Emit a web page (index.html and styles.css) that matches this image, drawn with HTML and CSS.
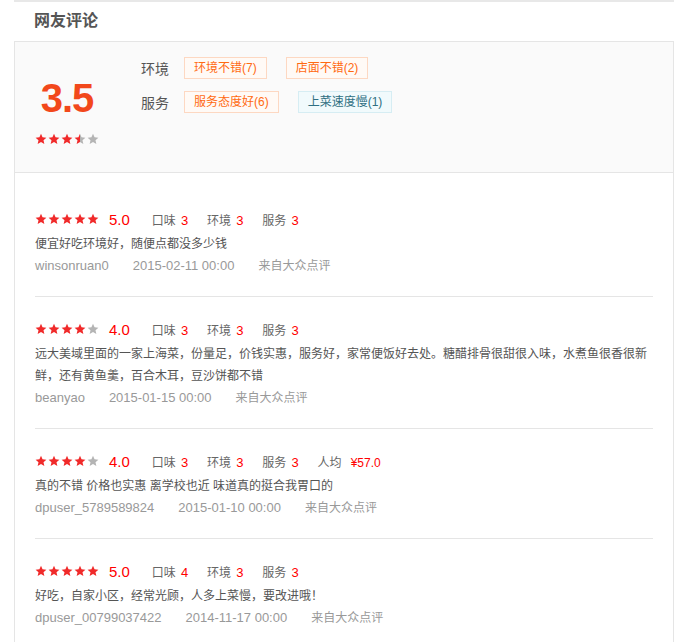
FILE: index.html
```html
<!DOCTYPE html>
<html lang="zh">
<head>
<meta charset="utf-8">
<link rel="stylesheet" href="styles.css">
</head>
<body>
<svg width="0" height="0" class="defs">
  <defs>
    <symbol id="star" viewBox="0 0 24 24"><path d="M12 1.5l3.1 7.1 7.7.7-5.8 5.1 1.7 7.6L12 18l-6.7 4 1.7-7.6L1.2 9.3l7.7-.7z"/></symbol>
    <linearGradient id="half"><stop offset="50%" stop-color="#f02a2a"/><stop offset="50%" stop-color="#b4b4b4"/></linearGradient>
  </defs>
</svg>
<div class="page">
  <div class="head"><h2 class="title">网友评论</h2></div>
  <div class="box">
    <div class="summary">
      <div class="score">
        <div class="num">3.5</div>
        <div class="stars">
          <svg class="s on"><use href="#star"/></svg><svg class="s on"><use href="#star"/></svg><svg class="s on"><use href="#star"/></svg><svg class="s half"><use href="#star"/></svg><svg class="s off"><use href="#star"/></svg>
        </div>
      </div>
      <div class="tags">
        <div class="tagrow"><span class="lbl">环境</span><span class="tag">环境不错(7)</span><span class="tag">店面不错(2)</span></div>
        <div class="tagrow"><span class="lbl">服务</span><span class="tag">服务态度好(6)</span><span class="tag neg">上菜速度慢(1)</span></div>
      </div>
    </div>
    <div class="list">
      <div class="review">
        <div class="rate">
          <span class="stars"><svg class="s on"><use href="#star"/></svg><svg class="s on"><use href="#star"/></svg><svg class="s on"><use href="#star"/></svg><svg class="s on"><use href="#star"/></svg><svg class="s on"><use href="#star"/></svg></span>
          <span class="val">5.0</span>
          <span class="item">口味<em>3</em></span><span class="item">环境<em>3</em></span><span class="item">服务<em>3</em></span>
        </div>
        <p class="text">便宜好吃环境好，随便点都没多少钱</p>
        <div class="meta"><span>winsonruan0</span><span>2015-02-11 00:00</span><span class="src">来自大众点评</span></div>
      </div>
      <div class="review">
        <div class="rate">
          <span class="stars"><svg class="s on"><use href="#star"/></svg><svg class="s on"><use href="#star"/></svg><svg class="s on"><use href="#star"/></svg><svg class="s on"><use href="#star"/></svg><svg class="s off"><use href="#star"/></svg></span>
          <span class="val">4.0</span>
          <span class="item">口味<em>3</em></span><span class="item">环境<em>3</em></span><span class="item">服务<em>3</em></span>
        </div>
        <p class="text">远大美域里面的一家上海菜，份量足，价钱实惠，服务好，家常便饭好去处。糖醋排骨很甜很入味，水煮鱼很香很新鲜，还有黄鱼羹，百合木耳，豆沙饼都不错</p>
        <div class="meta"><span>beanyao</span><span>2015-01-15 00:00</span><span class="src">来自大众点评</span></div>
      </div>
      <div class="review">
        <div class="rate">
          <span class="stars"><svg class="s on"><use href="#star"/></svg><svg class="s on"><use href="#star"/></svg><svg class="s on"><use href="#star"/></svg><svg class="s on"><use href="#star"/></svg><svg class="s off"><use href="#star"/></svg></span>
          <span class="val">4.0</span>
          <span class="item">口味<em>3</em></span><span class="item">环境<em>3</em></span><span class="item">服务<em>3</em></span><span class="item">人均<em class="price">¥57.0</em></span>
        </div>
        <p class="text">真的不错 价格也实惠 离学校也近 味道真的挺合我胃口的</p>
        <div class="meta"><span>dpuser_5789589824</span><span>2015-01-10 00:00</span><span class="src">来自大众点评</span></div>
      </div>
      <div class="review">
        <div class="rate">
          <span class="stars"><svg class="s on"><use href="#star"/></svg><svg class="s on"><use href="#star"/></svg><svg class="s on"><use href="#star"/></svg><svg class="s on"><use href="#star"/></svg><svg class="s on"><use href="#star"/></svg></span>
          <span class="val">5.0</span>
          <span class="item">口味<em>4</em></span><span class="item">环境<em>3</em></span><span class="item">服务<em>3</em></span>
        </div>
        <p class="text">好吃，自家小区，经常光顾，人多上菜慢，要改进哦！</p>
        <div class="meta"><span>dpuser_00799037422</span><span>2014-11-17 00:00</span><span class="src">来自大众点评</span></div>
      </div>
    </div>
  </div>
</div>
</body>
</html>
```
FILE: styles.css
```css
* { box-sizing: border-box; }
html, body { margin: 0; padding: 0; background: #fff; }
body {
  font-family: "Liberation Sans", "Noto Sans CJK SC", sans-serif;
  font-size: 12px;
  color: #555;
}
.defs { position: absolute; width: 0; height: 0; }
.page { margin-left: 14px; width: 660px; }
.head {
  border-top: 2px solid #e8e8e8;
  height: 41px;
  padding-left: 20px;
}
.title {
  margin: 0;
  font-size: 16px;
  font-weight: bold;
  color: #555;
  line-height: 38px;
}
.box {
  border: 1px solid #e5e5e5;
  border-bottom: none;
}
.summary {
  background: #fafafa;
  border-bottom: 1px solid #e5e5e5;
  height: 131px;
  display: flex;
  padding: 15px 0 0 20px;
}
.score {
  width: 64px;
  display: flex;
  flex-direction: column;
  align-items: center;
}
.score .num {
  font-size: 40px;
  font-weight: bold;
  color: #f2481b;
  line-height: 50px;
  margin-top: 16px;
  letter-spacing: -1px;
}
.score .stars { margin-top: 10px; }
.stars { display: inline-flex; gap: 1px; }
.s { width: 12px; height: 12px; display: block; }
.s.on { fill: #f02a2a; }
.s.off { fill: #b4b4b4; }
.s.half { fill: url(#half); }
.tags {
  margin-left: 42px;
  display: flex;
  flex-direction: column;
  gap: 12px;
}
.tagrow { display: flex; align-items: center; height: 22px; }
.lbl { font-size: 14px; color: #555; width: 43px; }
.tag {
  height: 22px;
  line-height: 20px;
  padding: 0 9px;
  border: 1px solid #fdd8c2;
  background: #fffaf6;
  color: #ff6a12;
  font-size: 12px;
  margin-right: 19px;
}
.tag.neg {
  border-color: #d6edf3;
  background: #f1fafc;
  color: #2f6f82;
}
.list { padding: 14px 20px 0 20px; }
.review {
  padding: 21px 0 19px;
  border-bottom: 1px solid #e5e5e5;
}
.review:last-child { border-bottom: none; }
.rate {
  display: flex;
  align-items: center;
  height: 22px;
}
.val {
  color: #f00;
  font-size: 15px;
  margin-left: 10px;
  margin-right: 22px;
}
.item { color: #666; font-size: 12px; margin-right: 19px; }
.item em { font-style: normal; color: #f00; margin-left: 5px; font-size: 13px; }
.item em.price { margin-left: 9px; font-size: 12px; }
.text { margin: 3px 0 0; line-height: 22px; font-size: 12px; color: #555; }
.meta { line-height: 22px; color: #999; font-size: 13px; display: flex; gap: 24px; }
.meta .src { font-size: 12px; }
```
